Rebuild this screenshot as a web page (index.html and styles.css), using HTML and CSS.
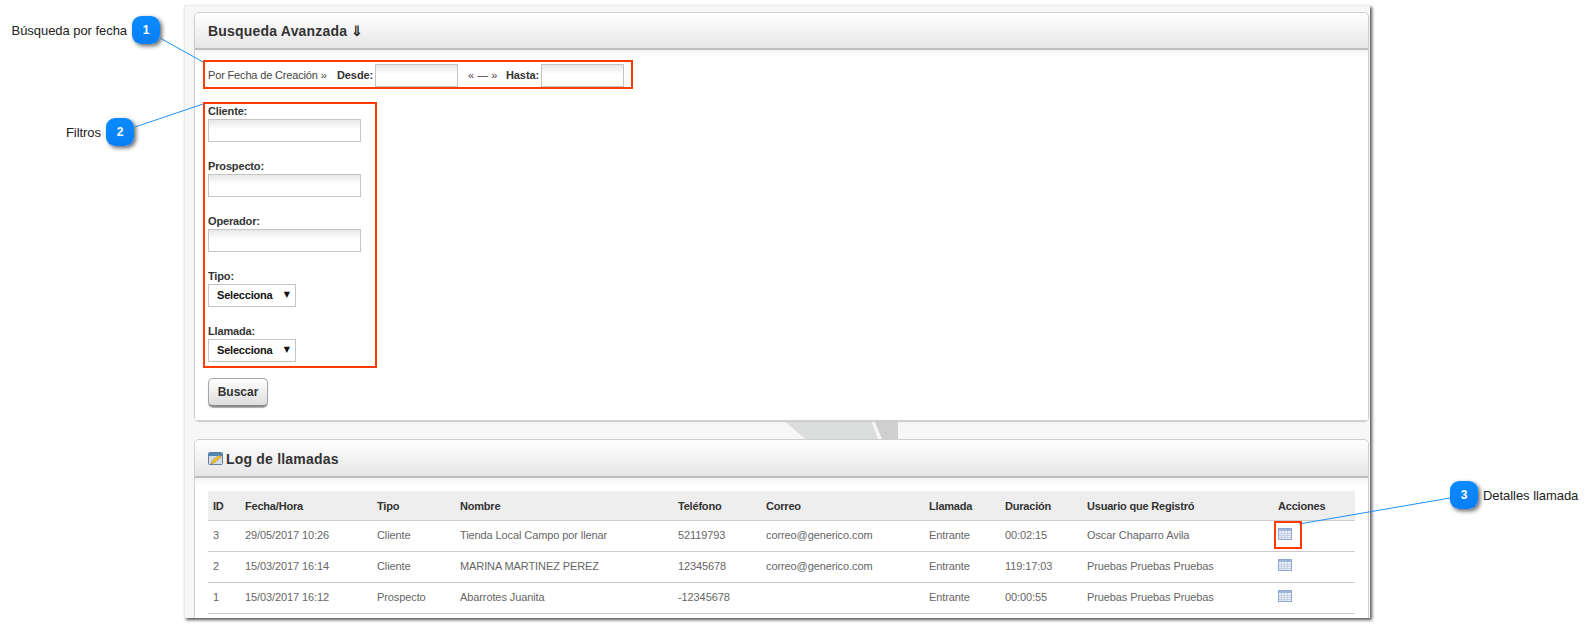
FILE: index.html
```html
<!DOCTYPE html>
<html lang="es">
<head>
    <meta charset="UTF-8">
    <title>Log de llamadas</title>
    <link rel="stylesheet" href="styles.css">
</head>
<body>
<svg class="defs" width="0" height="0">
    <symbol id="cal" viewBox="0 0 14 12">
        <rect x="0.5" y="0.5" width="13" height="11" fill="#eef1f7" stroke="#8ea8d2"/>
        <rect x="1" y="1" width="12" height="2" fill="#9db6dc"/>
        <path d="M1 5.5h12M1 7.5h12M1 9.5h12M3.5 3v8M6.5 3v8M9.5 3v8" stroke="#c3cfe3" fill="none"/>
    </symbol>
</svg>

<div class="panel">
    <svg class="watermark" width="1186" height="613" viewBox="0 0 1186 613">
        <polygon points="598,414 686,414 693,433 620,433" fill="#dcdedd"/>
        <polygon points="689,414 713,414 713,433 697,433" fill="#cfcfcf"/>
    </svg>

    <div class="card card-search">
        <div class="card-head"><h2>Busqueda Avanzada ⇓</h2></div>
        <div class="card-body">
            <div class="date-row">
                <span class="date-text">Por Fecha de Creación »</span>
                <label class="date-label date-desde">Desde:</label>
                <input class="text-input date-input" type="text">
                <span class="date-sep">« — »</span>
                <label class="date-label date-hasta">Hasta:</label>
                <input class="text-input date-input" type="text">
            </div>
            <div class="field">
                <label>Cliente:</label>
                <input class="text-input" type="text">
            </div>
            <div class="field">
                <label>Prospecto:</label>
                <input class="text-input" type="text">
            </div>
            <div class="field">
                <label>Operador:</label>
                <input class="text-input" type="text">
            </div>
            <div class="field">
                <label>Tipo:</label>
                <div class="select-box"><select><option>Selecciona</option></select></div>
            </div>
            <div class="field">
                <label>Llamada:</label>
                <div class="select-box"><select><option>Selecciona</option></select></div>
            </div>
            <button class="btn" type="button">Buscar</button>
        </div>
    </div>

    <div class="card card-log">
        <div class="card-head">
            <h2 class="log-title">
                <svg width="15" height="15" viewBox="0 0 15 15">
                    <rect x="0.5" y="1.5" width="14" height="12" rx="1" fill="#d5dde4" stroke="#5f7f9c"/>
                    <rect x="1" y="2" width="13" height="3" fill="#4f86b8"/>
                    <path d="M3 13l1-3 7-6 2 2-7 6z" fill="#f2c230" stroke="#a87c2a" stroke-width="0.6"/>
                </svg>
                Log de llamadas
            </h2>
        </div>
        <div class="card-body">
            <table class="log-table">
                <thead>
                <tr>
                    <th>ID</th><th>Fecha/Hora</th><th>Tipo</th><th>Nombre</th><th>Teléfono</th>
                    <th>Correo</th><th>Llamada</th><th>Duración</th><th>Usuario que Registró</th><th>Acciones</th>
                </tr>
                </thead>
                <tbody>
                <tr>
                    <td>3</td><td>29/05/2017 10:26</td><td>Cliente</td><td>Tienda Local Campo por llenar</td><td>52119793</td>
                    <td>correo@generico.com</td><td>Entrante</td><td>00:02:15</td><td>Oscar Chaparro Avila</td>
                    <td><svg class="cal-icon"><use href="#cal"/></svg></td>
                </tr>
                <tr>
                    <td>2</td><td>15/03/2017 16:14</td><td>Cliente</td><td>MARINA MARTINEZ PEREZ</td><td>12345678</td>
                    <td>correo@generico.com</td><td>Entrante</td><td>119:17:03</td><td>Pruebas Pruebas Pruebas</td>
                    <td><svg class="cal-icon"><use href="#cal"/></svg></td>
                </tr>
                <tr>
                    <td>1</td><td>15/03/2017 16:12</td><td>Prospecto</td><td>Abarrotes Juanita</td><td>-12345678</td>
                    <td></td><td>Entrante</td><td>00:00:55</td><td>Pruebas Pruebas Pruebas</td>
                    <td><svg class="cal-icon"><use href="#cal"/></svg></td>
                </tr>
                </tbody>
            </table>
        </div>
    </div>
</div>

<!-- anotaciones sobre la captura -->
<svg class="lines" width="1595" height="627" viewBox="0 0 1595 627">
    <line x1="160" y1="38" x2="203" y2="62"/>
    <line x1="135" y1="127" x2="203" y2="104"/>
    <line x1="1450" y1="498" x2="1299" y2="524"/>
</svg>
<div class="red-box red-date"></div>
<div class="red-box red-filters"></div>
<div class="red-box red-action"></div>

<div class="callout callout-1"><span>Búsqueda por fecha</span><b class="badge">1</b></div>
<div class="callout callout-2"><span>Filtros</span><b class="badge">2</b></div>
<div class="callout callout-3"><b class="badge">3</b><span>Detalles llamada</span></div>
</body>
</html>
```

FILE: styles.css
```css
* {
    margin: 0;
    padding: 0;
    box-sizing: border-box;
}

html, body {
    height: 627px;
    overflow: hidden;
    background-color: #fff;
}

body {
    font-family: "Liberation Sans", Arial, sans-serif;
    font-size: 11px;
    color: #333;
}

.defs {
    position: absolute;
}

/* contenedor gris */
.panel {
    position: relative;
    width: 1186px;
    height: 613px;
    margin: 5px 0 0 184px;
    padding: 6px 1px 0 9px;
    background-color: #f7f7f7;
    border-top: 1px solid #efefef;
    border-left: 1px solid #e9e9e9;
    box-shadow: 2px 2px 3px #555;
    overflow: hidden;
}
.watermark {
    position: absolute;
    top: 0;
    left: 0;
}

.card {
    position: relative;
    background-color: #fff;
    border: 1px solid #cfcfcf;
    border-radius: 5px;
}
.card-search {
    height: 409px;
    margin-bottom: 18px;
    box-shadow: 0 1px 1px #ccc;
}
.card-log {
    height: 220px;
}
.card-head {
    height: 37px;
    padding-left: 13px;
    display: flex;
    align-items: center;
    border-bottom: 2px solid #bdbdbd;
    border-radius: 5px 5px 0 0;
    background: linear-gradient(#fff, #e6e6e6);
}
.card-log .card-head {
    height: 38px;
}
.card-head h2 {
    font-size: 14px;
    font-weight: bold;
    letter-spacing: 0.2px;
    color: #333;
}
.log-title {
    display: flex;
    align-items: center;
    gap: 3px;
    margin-top: 1px;
}
.card-body {
    padding: 14px 13px 0;
    background: linear-gradient(#f4f4f4, #fff 8px);
}
.card-search .card-body {
    height: 370px;
}
.card-log .card-body {
    padding-top: 13px;
    height: 180px;
}

/* fechas */
.date-row {
    display: flex;
    align-items: center;
    height: 23px;
    margin-bottom: 16px;
}
.date-text {
    width: 129px;
    padding-bottom: 2px;
    font-size: 11px;
    letter-spacing: -0.16px;
    color: #444;
}
.date-label {
    padding-bottom: 2px;
    font-weight: bold;
    letter-spacing: -0.1px;
}
.date-desde {
    width: 38px;
}
.date-hasta {
    width: 35px;
}
.date-sep {
    width: 48px;
    padding: 0 0 2px 10px;
    color: #444;
}

.text-input {
    display: block;
    width: 153px;
    height: 23px;
    border: 1px solid #c4c4c4;
    background: linear-gradient(#e8e8e8, #fff 45%);
}
.date-input {
    width: 83px;
}

.field {
    height: 55px;
    padding-top: 2px;
    margin-bottom: 0;
}
.field label {
    display: block;
    height: 14px;
    font-weight: bold;
    line-height: 13px;
    letter-spacing: -0.15px;
}

.select-box {
    position: relative;
    width: 88px;
    height: 23px;
}
.select-box select {
    appearance: none;
    width: 100%;
    height: 100%;
    padding: 0 0 2px 8px;
    border: 1px solid #c4c4c4;
    border-radius: 0;
    background-color: #fff;
    font-family: "Liberation Sans", Arial, sans-serif;
    font-size: 11px;
    font-weight: bold;
    letter-spacing: -0.2px;
    color: #111;
}
.select-box::after {
    content: "▼";
    position: absolute;
    top: 6px;
    right: 6px;
    font-family: "DejaVu Sans", sans-serif;
    font-size: 8px;
    color: #111;
}

.btn {
    display: block;
    width: 60px;
    height: 29px;
    border: 1px solid #a5a5a5;
    border-bottom: 2px solid #8a8a8a;
    border-radius: 5px;
    background: linear-gradient(#fff, #ddd);
    box-shadow: 0 1px 1px #aaa;
    font-family: "Liberation Sans", Arial, sans-serif;
    font-size: 12px;
    font-weight: bold;
    color: #333;
}

/* tabla */
.log-table {
    width: 1147px;
    table-layout: fixed;
    border-collapse: collapse;
}
.log-table th {
    height: 29px;
    padding: 2px 0 0 5px;
    text-align: left;
    font-weight: bold;
    letter-spacing: -0.2px;
    background-color: #eee;
    border-bottom: 1px solid #ccc;
    color: #333;
}
.log-table td {
    height: 31px;
    padding: 0 0 2px 5px;
    letter-spacing: -0.1px;
    color: #666;
    border-bottom: 1px solid #ccc;
    white-space: nowrap;
}
.log-table th:nth-child(1) { width: 32px; }
.log-table th:nth-child(2) { width: 132px; }
.log-table th:nth-child(3) { width: 83px; }
.log-table th:nth-child(4) { width: 218px; }
.log-table th:nth-child(5) { width: 88px; }
.log-table th:nth-child(6) { width: 163px; }
.log-table th:nth-child(7) { width: 76px; }
.log-table th:nth-child(8) { width: 82px; }
.log-table th:nth-child(9) { width: 191px; }
.log-table th:nth-child(10) { width: 82px; }
.cal-icon {
    display: block;
    width: 14px;
    height: 12px;
    margin-bottom: 2px;
}

/* anotaciones */
.lines {
    position: absolute;
    top: 0;
    left: 0;
}
.lines line {
    stroke: #1e90ff;
    stroke-width: 1;
}
.red-box {
    position: absolute;
    border: 2px solid #ff3b00;
}
.red-date {
    left: 203px;
    top: 60px;
    width: 430px;
    height: 29px;
}
.red-filters {
    left: 203px;
    top: 102px;
    width: 174px;
    height: 266px;
}
.red-action {
    left: 1274px;
    top: 521px;
    width: 28px;
    height: 28px;
}

.callout {
    position: absolute;
    display: flex;
    align-items: center;
    gap: 5px;
    font-size: 13px;
    letter-spacing: -0.05px;
    color: #222;
    white-space: nowrap;
}
.callout-1 {
    top: 16px;
    right: 1435px;
}
.callout-2 {
    top: 118px;
    right: 1461px;
}
.callout-3 {
    top: 481px;
    left: 1450px;
}
.badge {
    display: block;
    width: 28px;
    height: 28px;
    border-radius: 9px;
    background: linear-gradient(#0a8bff, #0a7ef5);
    box-shadow: 2px 2px 4px #666;
    color: #fff;
    font-size: 12px;
    line-height: 28px;
    text-align: center;
}
```
